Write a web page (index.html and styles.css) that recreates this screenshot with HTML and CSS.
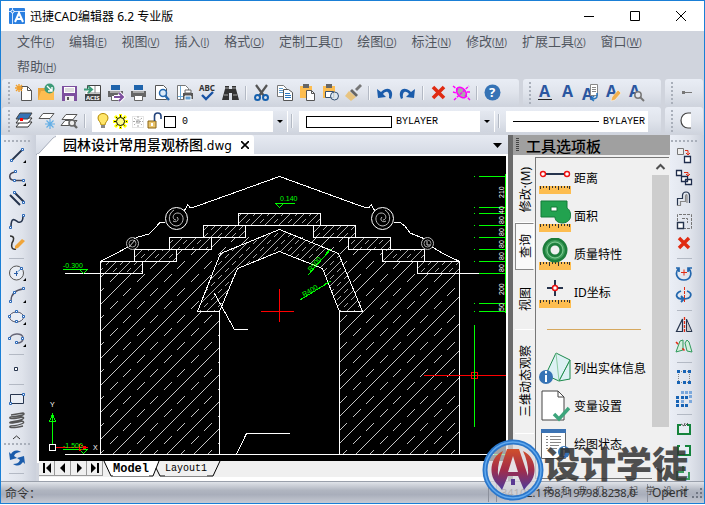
FILE: index.html
```html
<!DOCTYPE html>
<html lang="zh-CN">

<head>
    <meta charset="UTF-8" />
    <meta name="viewport" content="width=device-width, initial-scale=1.0" />
    <title>迅捷CAD编辑器 6.2 专业版</title>
    <link rel="stylesheet" href="styles.css">
</head>

<body>

    <div class="window">
        <header class="titlebar">
            <svg class="app-icon" width="16" height="16" viewBox="0 0 16 16">
                <rect width="16" height="16" rx="1" fill="#2a7fe0" />
                <path d="M3.500 0V16M0 3.500H16" stroke="#cfe4ff" />
                <circle cx="3.500" cy="3.500" r="1.500" fill="#2a7fe0" stroke="#fff" />
                <path d="M6 14L10 5L14 14M7.500 11H12.500" fill="none" stroke="#fff" stroke-width="2" />
            </svg>
            <h1>迅捷CAD编辑器 6.2 专业版</h1>
            <div class="window-buttons">
                <button aria-label="最小化"><svg width="12" height="12"><path d="M1 6.500H11" /></svg></button>
                <button aria-label="最大化"><svg width="12" height="12"><path d="M1.500 1.500H10.500V10.500H1.500Z" /></svg></button>
                <button aria-label="关闭"><svg width="12" height="12"><path d="M1 1L11 11M11 1L1 11" /></svg></button>
            </div>
        </header>

        <nav class="menubar">
            <button>文件<small>(<u>F</u>)</small></button>
            <button>编辑<small>(<u>E</u>)</small></button>
            <button>视图<small>(<u>V</u>)</small></button>
            <button>插入<small>(<u>I</u>)</small></button>
            <button>格式<small>(<u>O</u>)</small></button>
            <button>定制工具<small>(<u>T</u>)</small></button>
            <button>绘图<small>(<u>D</u>)</small></button>
            <button>标注<small>(<u>N</u>)</small></button>
            <button>修改<small>(<u>M</u>)</small></button>
            <button>扩展工具<small>(<u>X</u>)</small></button>
            <button>窗口<small>(<u>W</u>)</small></button>
            <button>帮助<small>(<u>H</u>)</small></button>
        </nav>

        <!-- Standard toolbar -->
        <div class="toolbar-row">
            <div class="toolbar main">
                <span class="grip"></span>
                <button aria-label="新建"><svg viewBox="0 0 19 19"><path d="M7.500 3.500H13.500L17.500 7.500V17.500H7.500Z" fill="#fff" stroke="#555" /><path d="M13.500 3.500V7.500H17.500" fill="none" stroke="#555" /><path d="M5 1V9M1 5H9M2 2L8 8M8 2L2 8" stroke="#f0a030" stroke-width="1.400" /></svg></button>
                <button aria-label="打开"><svg viewBox="0 0 19 19"><path d="M1 5H8V17H1Z" fill="#e8a33c" /><path d="M1 17L4 8H17V17Z" fill="#fdbd50" /><circle cx="12.500" cy="5.500" r="5" fill="#3d9b78" /><path d="M10 3L15 8M15 4V8H11" fill="none" stroke="#fff" stroke-width="1.400" /></svg></button>
                <button aria-label="保存"><svg viewBox="0 0 19 19"><path d="M2 3H17V18H2Z" fill="#7d4f9f" /><path d="M4 4H15V10H4Z" fill="#fff" /><path d="M5 6H14M5 8H14" stroke="#bbb" /><path d="M5 13H14V18H5Z" fill="#eee" /><path d="M7 14H9V17H7Z" fill="#555" /></svg></button>
                <button aria-label="导出 ACIS"><svg viewBox="0 0 19 19"><path d="M4.500 6V2.500H17.500V17.500H2.500V11" fill="#fff" stroke="#444" /><path d="M12 3V10M4 10H17" stroke="#888" /><path d="M2 11H18V18H2Z" fill="#444" /><text x="3" y="17" font-size="6" font-weight="700" fill="#fff">ACIS</text><path d="M1 6.500H8M5 3L9 6.500L5 10" fill="none" stroke="#3d9b78" stroke-width="2" /></svg></button>
                <button aria-label="快速打印"><svg viewBox="0 0 19 19"><use href="#printer" /><path d="M8 14H17M13 10L17 14L13 18" fill="none" stroke="#fff" stroke-width="4" /><path d="M8 14H17M13 10L17 14L13 18" fill="none" stroke="#7d4f9f" stroke-width="2" /></svg></button>
                <button aria-label="打印"><svg viewBox="0 0 19 19"><g id="printer"><path d="M5 2H14V7H5Z" fill="#1f64ac" /><path d="M2 8H17V14H2Z" fill="#666" /><path d="M4 8H15V10H4Z" fill="#aaa" /><path d="M5.500 12.500H13.500V17.500H5.500Z" fill="#fff" stroke="#666" /></g></svg></button>
                <button aria-label="打印预览"><svg viewBox="0 0 19 19"><path d="M3.500 2.500H11.500L14.500 5.500V16.500H3.500Z" fill="#fff" stroke="#555" /><circle cx="11" cy="10" r="3.500" fill="#dceaf7" stroke="#2367ae" stroke-width="1.500" /><path d="M13.500 13L17 17" stroke="#2367ae" stroke-width="2.400" /></svg></button>
                <button aria-label="页面设置"><svg viewBox="0 0 19 19"><path d="M2.500 2.500H10.500L13.500 5.500V16.500H2.500Z" fill="#fff" stroke="#777" /><path d="M5.500 3V16M3 13.500H10" stroke="#6aa9d8" /><path d="M8 10H18V16H8Z" fill="#555" /><path d="M10 7H16V10H10Z" fill="#fff" stroke="#666" /><path d="M10 13H16V17H10Z" fill="#5c9bd0" stroke="#fff" /></svg></button>
                <button aria-label="拼写检查"><svg viewBox="0 0 19 19"><text x="1" y="8" font-size="8" font-weight="700" fill="#333">ABC</text><path d="M4 12L8 16L15 9" fill="none" stroke="#1853a5" stroke-width="2.400" /></svg></button>
                <button aria-label="查找"><svg viewBox="0 0 19 19"><path d="M4 3H8V6H11V3H15V6L18 17H11V10H8V17H1L4 6Z" fill="#333" /><path d="M3 12H7M12 12H16M4 5H8M11 5H15" stroke="#aaa" /></svg></button>
                <span class="sep"></span>
                <button aria-label="剪切"><svg viewBox="0 0 19 19"><path d="M4 2L12 13M15 2L7 13" stroke="#555" stroke-width="2.200" /><circle cx="5.500" cy="14.500" r="2.500" fill="none" stroke="#1560ae" stroke-width="2" /><circle cx="13.500" cy="14.500" r="2.500" fill="none" stroke="#1560ae" stroke-width="2" /></svg></button>
                <button aria-label="复制"><svg viewBox="0 0 19 19"><path d="M2.500 2.500H8.500L11.500 5.500V13.500H2.500Z" fill="#fff" stroke="#777" /><path d="M4 5.500H8M4 7.500H9M4 9.500H9" stroke="#5c9bd0" /><path d="M8.500 6.500H13.500L17.500 9.500V17.500H8.500Z" fill="#fff" stroke="#555" /><path d="M10 10.500H15M10 12.500H16M10 14.500H16" stroke="#2a76bd" /></svg></button>
                <button aria-label="粘贴"><svg viewBox="0 0 19 19"><use href="#clip" /><path d="M8.500 7.500H13.500L16.500 10.500V17.500H8.500Z" fill="#fff" stroke="#555" /><path d="M13.500 7.500V10.500H16.500" fill="none" stroke="#555" /></svg></button>
                <button aria-label="选择性粘贴"><svg viewBox="0 0 19 19"><g id="clip"><path d="M2 3H14V15H2Z" fill="#fdbd50" /><path d="M5 1H11V5H5Z" fill="#666" /></g><path d="M4.500 8.500H12.500V14.500H4.500Z" fill="#fff" stroke="#35506f" /><circle cx="13.500" cy="13" r="4" fill="#dbe8f5" fill-opacity=".8" stroke="#35506f" /></svg></button>
                <button aria-label="格式刷"><svg viewBox="0 0 19 19"><path d="M11 6L16 1L18 3L13 8Z" fill="#777" /><path d="M8 6L14 12L12 14L6 8Z" fill="#666" /><path d="M5 8L12 14L7 18L1 13Z" fill="#e8c480" /></svg></button>
                <span class="sep"></span>
                <button aria-label="撤销"><svg viewBox="0 0 19 19"><path d="M2 6L3 15L11 14L8 11C11 7 15 8 14 15L16 16C20 7 13 2 6 9Z" fill="#1b5cab" /></svg></button>
                <button aria-label="重做"><svg viewBox="0 0 19 19"><path d="M17 6L16 15L8 14L11 11C8 7 4 8 5 15L3 16C-1 7 6 2 13 9Z" fill="#1b5cab" /></svg></button>
                <span class="sep"></span>
                <button aria-label="删除"><svg viewBox="0 0 19 19"><path d="M4 4L15 15M15 4L4 15" stroke="#e02b12" stroke-width="3.600" /></svg></button>
                <button aria-label="清除"><svg viewBox="0 0 19 19"><ellipse cx="9.500" cy="9.500" rx="4" ry="6" transform="rotate(-40 9.500 9.500)" fill="#aaa" stroke="#f0f" stroke-width="1.500" /><path d="M1 3L6 7M2 17L17 3M13 12L18 17M1 9L4 10M15 9H18" stroke="#f0f" stroke-width="1.400" stroke-dasharray="3 1" /></svg></button>
                <span class="sep"></span>
                <button aria-label="帮助"><svg viewBox="0 0 19 19"><circle cx="9.500" cy="9.500" r="8" fill="#3673b5" /><text x="6" y="14" font-size="13" font-weight="700" fill="#fff">?</text></svg></button>
            </div>
            <div class="toolbar text-tools">
                <span class="grip"></span>
                <button aria-label="单行文字"><svg viewBox="0 0 19 19"><text x="4" y="14" class="letter">A</text><path d="M3 16.500H17" stroke="#222" /></svg></button>
                <button aria-label="多行文字"><svg viewBox="0 0 19 19"><text x="4" y="14" class="letter">A</text></svg></button>
                <button aria-label="文字样式"><svg viewBox="0 0 19 19"><text x="1" y="17" class="letter">A</text><path d="M9.500 1.500H16.500V12.500H9.500Z" fill="#fff" stroke="#888" /><path d="M11 4.500H15M11 6.500H15M11 8.500H15" stroke="#888" /><path d="M16 10V13C16 15 14 16 11 16M13 13L10 16L13 18" fill="none" stroke="#2a76bd" stroke-width="1.500" /></svg></button>
                <button aria-label="编辑文字"><svg viewBox="0 0 19 19"><text x="2" y="14" class="letter">A</text><path d="M8 14L14 7L17 10L11 17L7 18Z" fill="#f0b050" stroke="#fff" stroke-width=".5" /></svg></button>
                <button aria-label="查找文字"><svg viewBox="0 0 19 19"><text x="2" y="14" class="letter">A</text><circle cx="11" cy="12" r="3.200" fill="#e4e7ee" stroke="#777" stroke-width="1.500" /><path d="M13 14L17 18" stroke="#777" stroke-width="2" /></svg></button>
            </div>
            <div class="toolbar rest">
                <span class="grip"></span>
                <button aria-label="点"><svg viewBox="0 0 19 19"><path d="M5 9.500H15" stroke="#777" /><path d="M5 8H8V11H5Z" fill="#777" /></svg></button>
            </div>
        </div>

        <!-- Layer and property toolbar -->
        <div class="toolbar-row">
            <div class="toolbar props">
                <span class="grip"></span>
                <button aria-label="图层特性"><svg viewBox="0 0 19 19"><path d="M6 11H18L14 16H2Z" fill="#fff" stroke="#333" /><path d="M6 7H18L14 12H2Z" fill="#fff" stroke="#333" /><path d="M6 2H18L14 8H2Z" fill="#3673b5" stroke="#444" /><path d="M6 7H9V10H6Z" fill="#f00" /></svg></button>
                <button aria-label="冻结图层"><svg viewBox="0 0 19 19"><path d="M6 2.500H17L13 7.500H2Z" fill="#fff" stroke="#555" /><path d="M13 8V18M8 13H18M9.500 9.500L16.500 16.500M16.500 9.500L9.500 16.500" stroke="#62aee6" stroke-width="1.200" /></svg></button>
                <button aria-label="查找图层"><svg viewBox="0 0 19 19"><path d="M5 9.500H17L13 14.500H1Z" fill="#fff" stroke="#555" /><path d="M6 3.500H17L13 8.500H2Z" fill="#fff" stroke="#555" /><circle cx="12" cy="12" r="3" fill="#eee" stroke="#666" stroke-width="1.600" /><path d="M14 14L17 17" stroke="#666" stroke-width="2.400" /></svg></button>
                <span class="sep"></span>
                <div class="combo layer">
                    <svg width="66" height="19" viewBox="0 0 66 19">
                        <path d="M1 6C1 0 11 0 11 6C11 9 8 10 8 13H4C4 10 1 9 1 6Z" fill="#ffe66a" stroke="#b58a00" /><path d="M4 13H8V16H4Z" fill="#888" />
                        <path d="M23.500 2V17M16 9.500H31M18 4L29 15M29 4L18 15" stroke="#ff0" stroke-width="3" /><path d="M23.500 3V16M17 9.500H30M19 5L28 14M28 5L19 14" stroke="#111" stroke-dasharray="2 1" /><circle cx="23.500" cy="9.500" r="4" fill="#ff8" stroke="#111" />
                        <path d="M35.500 4.500H46.500V15.500H35.500Z" fill="none" stroke="#ccc" stroke-dasharray="1 1" /><path d="M41 4V15M36 9.500H46M37 6L45 13M45 6L37 13" stroke="#aaa" stroke-dasharray="2 1" />
                        <path d="M51 9H59V16H51Z" fill="#e9c46b" stroke="#8a6414" /><path d="M57.500 9V4C57.500 0 64 0 64 4V7" fill="none" stroke="#24447c" stroke-width="1.600" /><path d="M54 11H56V14H54Z" fill="#fff" />
                    </svg>
                    <span class="color-box"></span>
                    <select aria-label="图层"><option>0</option></select>
                    <span class="drop"></span>
                </div>
                <span class="sep"></span>
                <div class="combo color">
                    <span class="swatch"></span>
                    <select aria-label="颜色"><option>BYLAYER</option></select>
                    <span class="drop"></span>
                </div>
                <span class="sep"></span>
                <div class="combo linetype">
                    <span class="line"></span>
                    <select aria-label="线型"><option>BYLAYER</option></select>
                </div>
            </div>
            <div class="toolbar rest">
                <span class="grip"></span>
                <button aria-label="圆弧"><svg viewBox="0 0 19 19"><path d="M14 2H11A7 7.500 0 0 0 11 17H14" fill="#fff" stroke="#444" stroke-width="1.200" /></svg></button>
            </div>
        </div>

        <main class="workspace">
            <!-- Draw tools -->
            <div class="sidebar">
                <span class="grip"></span>
                <button aria-label="直线"><svg viewBox="0 0 18 18"><path d="M4 14L14 4" stroke="#26344d" stroke-width="1.800" /><path class="node" d="M2.500 13.500h2v2h-2ZM13.500 2.500h2v2h-2Z" /><path d="M18 14V17H15Z" /></svg></button>
                <button aria-label="多段线"><svg viewBox="0 0 18 18"><path d="M7 4C0 5 0 12 7 12.500H14" fill="none" stroke="#445" stroke-width="1.500" /><path class="node" d="M6.500 2.500h2v2h-2ZM5.500 11.500h2v2h-2ZM14.500 11.500h2v2h-2Z" /><path d="M18 15V18H15Z" /></svg></button>
                <button aria-label="双线"><svg viewBox="0 0 18 18"><path d="M7 3L16 12M2 5L12 15" stroke="#26344d" stroke-width="2" /><path class="node" d="M5.500 1.500h2v2h-2ZM14.500 11.500h2v2h-2Z" /></svg></button>
                <button aria-label="样条曲线"><svg viewBox="0 0 18 18"><path d="M3 15C3 3 8 9 10 10C14 11 15 8 15 4" fill="none" stroke="#26344d" stroke-width="1.600" /><path class="node" d="M1.500 14.500h2v2h-2ZM14.500 2.500h2v2h-2Z" /></svg></button>
                <button aria-label="徒手画"><svg viewBox="0 0 18 18"><path d="M2 2C7 2 6 6 4 9C3 13 4 16 8 15" fill="none" stroke="#333" stroke-width="1.500" /><path d="M7 12L14 5L17 7L10 14L7 15Z" fill="#f0a53a" /></svg></button>
                <span class="sep"></span>
                <button aria-label="圆"><svg viewBox="0 0 18 18"><circle cx="8.500" cy="9" r="7" fill="#e9edf4" stroke="#555" /><path d="M8 9L13 5" stroke="#2a76bd" stroke-dasharray="2 1" /><path d="M6 9.500H10M8.500 7V12" stroke="#2a5fa8" /><path class="node" d="M12.500 3.500h2v2h-2Z" /><path d="M18 14V17H15Z" /></svg></button>
                <button aria-label="圆弧"><svg viewBox="0 0 18 18"><path d="M3 15C3 8 8 4 15 3" fill="none" stroke="#556" stroke-width="1.300" /><path class="node" d="M1.500 14.500h2v2h-2ZM5.500 5.500h2v2h-2ZM14.500 1.500h2v2h-2Z" /><path d="M18 14V17H15Z" /></svg></button>
                <button aria-label="椭圆"><svg viewBox="0 0 18 18"><ellipse cx="8.500" cy="9" rx="7" ry="5" fill="#e9edf4" stroke="#556" /><path class="node" d="M0.500 7.500h2v2h-2ZM7.500 2.500h2v2h-2ZM14.500 7.500h2v2h-2ZM7.500 12.500h2v2h-2Z" /><path d="M18 14V17H15Z" /></svg></button>
                <button aria-label="椭圆弧"><svg viewBox="0 0 18 18"><path d="M2 9C2 3 15 2 15 8C15 12 12 13 9 13" fill="none" stroke="#667" stroke-width="1.500" /><path class="node" d="M0.500 7.500h2v2h-2ZM13.500 7.500h2v2h-2ZM7.500 11.500h2v2h-2Z" /><path d="M18 14V17H15Z" /></svg></button>
                <span class="sep"></span>
                <button aria-label="点"><svg viewBox="0 0 18 18"><path d="M6.500 7.500h3v3h-3Z" fill="#fff" stroke="#26344d" /></svg></button>
                <span class="sep"></span>
                <button aria-label="矩形"><svg viewBox="0 0 18 18"><path d="M2.500 4.500H15.500V13.500H2.500Z" fill="#e9edf4" stroke="#26344d" /><path class="node" d="M1.500 12.500h2v2h-2ZM14.500 3.500h2v2h-2Z" /></svg></button>
                <button aria-label="螺旋"><svg viewBox="0 0 18 18"><path d="M3 3L15 1C18 2 15 4 3 5C0 6 2 8 14 5C18 6 15 8 3 10C0 11 2 12 14 9C18 10 15 13 3 14C0 15 2 17 15 14" fill="none" stroke="#555" stroke-width="1.400" /></svg></button>
                <button class="more" aria-label="更多"><svg width="9" height="5"><path d="M1 4L4.500 1L8 4" fill="none" stroke="#333" /></svg></button>
                <span class="grip"></span>
                <button aria-label="重生成"><svg viewBox="0 0 18 18"><path d="M1 3L2 11L9 9L6 7C7 4 10 3 13 3C8 0 5 2 3 5ZM17 15L16 7L9 9L12 11C11 14 8 15 5 15C10 18 13 16 15 13Z" fill="#1b5cab" /></svg></button>
                <span class="sep"></span>
            </div>

            <!-- Document -->
            <section class="document">
                <div class="doc-tabs">
                    <svg width="20" height="20"><path d="M0 20H2L18 2Q19 1 20 1V20Z" fill="#fff" /><path d="M0 19.500Q3 19 5 16L17 3Q19 1.500 20 1.500" fill="none" stroke="#aab0bd" /></svg>
                    <div class="doc-tab">
                        <a href="#drawing">园林设计常用景观桥图<span>.dwg</span></a>
                        <button aria-label="关闭文档"><svg width="8" height="8"><path d="M0 0L8 8M8 0L0 8" stroke="#000" stroke-width="1.600" /></svg></button>
                    </div>
                    <button class="doc-list" aria-label="文档列表"><svg width="9" height="5"><path d="M0 0H9L4.500 5Z" /></svg></button>
                </div>

                <svg class="drawing" id="drawing" role="img" aria-label="桥立面图">
                    <defs>
                        <pattern id="wide" width="27" height="27" patternUnits="userSpaceOnUse">
                            <path d="M-1 28L28 -1M2 12L10 4M15 26L23 18" stroke="#c4c4c4" />
                        </pattern>
                        <pattern id="tight" width="14" height="14" patternUnits="userSpaceOnUse">
                            <path d="M-1 15L15 -1M1 6L5 2M8 13L12 9" stroke="#aaa" />
                        </pattern>
                        <g id="side">
                            <path fill="url(#wide)" stroke="none" d="M100 273H142V261H176V249H211V237H260L220 253L197 311H219V454H100Z" />
                            <path fill="url(#tight)" d="M100.500 261.500H142.500V273.500H100.500ZM134.500 249.500H176.500V261.500H134.500ZM169.500 237.500H211.500V249.500H169.500ZM203.500 225.500H245.500V237.500H203.500Z" />
                            <path d="M100.500 261.500V454.500M219.500 311.500V454.500" />
                            <path d="M279.500 176.500L193 207.500L190 207.500L187.500 204.500L186 208L184 211M165 222.500H160L154 229L149 234L138 237L134 239M128 247L115 254L100.500 261.500" />
                            <g class="smooth">
                                <circle cx="176.500" cy="218.500" r="11" />
                                <path stroke="#bbb" d="M176 220C172 220 172 213 178 213C186 214 184 226 176 226C168 225 167 214 174 210M177 217C180 220 176 223 173 221" />
                                <circle cx="132.500" cy="243.500" r="6" stroke="#bbb" />
                                <circle cx="132.500" cy="243.500" r="3.500" stroke="#999" />
                                <path stroke="#ccc" d="M129 247L135 240" />
                            </g>
                        </g>
                    </defs>
                    <g transform="translate(-39 -156)" fill="none" stroke="#fff" shape-rendering="crispEdges">
                        <use href="#side" />
                        <path fill="url(#wide)" stroke="none" d="M459 273H417V261H383V249H348V237H299L339 253L362 311H340V454H459Z" />
                        <path fill="url(#tight)" d="M417.500 261.500H459.500V273.500H417.500ZM382.500 249.500H424.500V261.500H382.500ZM348.500 237.500H390.500V249.500H348.500ZM313.500 225.500H355.500V237.500H313.500Z" />
                        <path d="M459.500 261.500V454.500M339.500 311.500V454.500M279.500 176.500L365 207.500H369L371.500 204.500L373 208L375 211M394 222.500H400L405 226L410 233L420 237L425 239M432 247L444 254L459.500 261.500" />
                        <g class="smooth">
                            <circle cx="382.500" cy="218.500" r="11" />
                            <path stroke="#bbb" d="M383 220C387 220 387 213 381 213C373 214 375 226 383 226C391 225 392 214 385 210M382 217C379 220 383 223 386 221" />
                            <circle cx="427.500" cy="243.500" r="6" stroke="#bbb" />
                            <circle cx="427.500" cy="243.500" r="3.500" stroke="#999" />
                            <path stroke="#ccc" d="M427 241V245H430" />
                        </g>
                        <path fill="url(#tight)" d="M238.500 213.500H320.500V225.500H238.500Z" />
                        <path fill="url(#tight)" d="M279.500 229.500L220.500 253.500L197.500 311.500H219.500L237.500 268.500L279.500 251.500L322.500 268.500L339.500 311.500H362.500L338.500 253.500Z" />
                        <path d="M65 273.500H142M459 273.500H479M65 454.500H506M214.500 293.500L234.500 329.500H248M236.500 454.500L246.500 433.500H290" />

                        <path stroke="#f00" d="M261 311.500H294M279.500 289V322M424 375.500H506M471.500 372.500H477.500V378.500H471.500Z" />
                        <g stroke="#0f0">
                            <path d="M474.500 325V427M505.500 174V313M479 176.500H506M479 207.500H506M479 213.500H506M479 225.500H506M479 237.500H506M479 249.500H506M479 261.500H506M479 273.500H506M479 303.500H506M479 311.500H506M494 454.500H506" />
                            <path stroke-dasharray="1 100" d="M474 176.500H477M474 207.500H477M474 213.500H477M474 225.500H477M474 237.500H477M474 249.500H477M474 261.500H477M474 303.500H477M474 311.500H477" />
                            <path d="M275 203.500H295M275.500 203.500L279.500 207.500L283.500 203.500M63 269.500H88M79.500 269.500L83.500 273.500L87.500 269.500" />
                            <path d="M308 275L331 249M300 300L331 281M326 253L331 249M325 284L331 281" />
                            <path d="M52.500 445V415M49.500 421.500H55.500L52.500 414ZM63 449.500H88M79.500 449.500L83.500 453.500L87.500 449.500" />
                        </g>
                        <path stroke="#f00" d="M55 447.500H87M79.500 444.500V450.500L87 447.500Z" />
                        <path d="M49.500 444.500H55.500V450.500H49.500Z" />

                        <g class="dim" stroke="none" fill="#0f0">
                            <text x="280" y="201">0.140</text>
                            <text x="63" y="268">-0.300</text>
                            <text x="63" y="448">-1.500</text>
                            <text transform="translate(311 272) rotate(-50)">R500</text>
                            <text transform="translate(304 297) rotate(-31)">R400</text>
                        </g>
                        <g class="dim" stroke="none" fill="#fff">
                            <text x="50" y="407">Y</text>
                            <text x="93" y="450">X</text>
                            <text transform="translate(504 198) rotate(-90)">210</text>
                            <text transform="translate(504 214) rotate(-90)">40</text>
                            <text transform="translate(504 224) rotate(-90)">80</text>
                            <text transform="translate(504 236) rotate(-90)">80</text>
                            <text transform="translate(504 248) rotate(-90)">80</text>
                            <text transform="translate(504 260) rotate(-90)">80</text>
                            <text transform="translate(504 272) rotate(-90)">80</text>
                            <text transform="translate(504 295) rotate(-90)">200</text>
                            <text transform="translate(504 311) rotate(-90)">50</text>
                        </g>
                    </g>
                </svg>

                <div class="layout-tabs">
                    <button aria-label="第一页"><svg width="10" height="10"><path d="M1 0H3V10H1ZM9 0V10L4 5Z" /></svg></button>
                    <button aria-label="上一页"><svg width="10" height="10"><path d="M7 0V10L2 5Z" /></svg></button>
                    <button aria-label="下一页"><svg width="10" height="10"><path d="M3 0V10L8 5Z" /></svg></button>
                    <button aria-label="最后一页"><svg width="10" height="10"><path d="M7 0H9V10H7ZM1 0V10L6 5Z" /></svg></button>
                    <svg width="10" height="16"><path d="M1 0H10V15H8Z" fill="#fff" /><path d="M1 0L8 15H10" fill="none" stroke="#000" /></svg>
                    <a class="current" href="#model">Model</a>
                    <svg width="16" height="16"><path d="M0 0H10L4 15H0Z" fill="#fff" /><path d="M10 0L4 15H0M7 7L11 15H16" fill="none" stroke="#000" /></svg>
                    <a href="#layout1">Layout1</a>
                    <svg width="14" height="16"><path d="M0 15H6L13 0" fill="none" stroke="#000" /></svg>
                </div>
            </section>

            <!-- Tool palette -->
            <aside class="palette">
                <h2><span class="grip"></span>工具选项板</h2>
                <div class="palette-body">
                    <div class="palette-tabs">
                        <button class="modify"><span>修改·(M)</span></button>
                        <button class="query active"><span>查询</span></button>
                        <button class="view"><span>视图</span></button>
                        <button class="orbit"><span>三维动态观察</span></button>
                        <button class="extra" aria-label="更多选项板"></button>
                    </div>
                    <div class="palette-list">
                        <button><svg viewBox="0 0 32 32"><g id="ruler"><path d="M0 24H32V32H0Z" fill="#fdbd50" /><path d="M1.500 24V27M4.500 24V26M7.500 24V26M10.500 24V28M13.500 24V26M16.500 24V26M19.500 24V28M22.500 24V26M25.500 24V26M28.500 24V26M30.500 24V27" stroke="#333" /></g><path d="M6 12H26" stroke="#26344d" stroke-width="2" /><circle cx="4" cy="12" r="2.500" fill="#fff" stroke="#e11" stroke-width="1.400" /><circle cx="28" cy="12" r="2.500" fill="#fff" stroke="#e11" stroke-width="1.400" /></svg>距离</button>
                        <button><svg viewBox="0 0 32 32"><use href="#ruler" /><path d="M2 1H28V8C33 11 34 22 24 23C18 23 16 20 16 17H2Z" fill="#22a24f" stroke="#127a38" /><path d="M12 7H18V11H12Z" fill="#fff" stroke="#127a38" /></svg>面积</button>
                        <button><svg viewBox="0 0 32 32"><use href="#ruler" /><circle cx="16" cy="12" r="8.500" fill="none" stroke="#1c7d3b" stroke-width="8" /><circle cx="16" cy="12" r="8.500" fill="none" stroke="#3f9f5c" stroke-width="3" /><circle cx="16" cy="12" r="8" fill="none" stroke="#8fd2a0" stroke-width=".800" /></svg>质量特性</button>
                        <button><svg viewBox="0 0 32 32"><use href="#ruler" /><path d="M16 4V20M8 12H24" stroke="#26344d" stroke-width="2" /><circle cx="16" cy="12" r="2.500" fill="#fff" stroke="#e11" stroke-width="1.500" /></svg>ID坐标</button>
                        <hr>
                        <button><svg viewBox="0 0 32 32"><path d="M8 20L17 1L31 8V27L20 29L9 24Z" fill="#dcf1f4" stroke="#1c8a4c" /><path d="M31 8L20 29L17 1" fill="none" stroke="#8ccca4" /><path d="M31 8L20 29" stroke="#1c8a4c" /><circle cx="7" cy="25" r="7" fill="#3673b5" /><path d="M7 23V30M7 19V21.500" stroke="#fff" stroke-width="2" /></svg>列出实体信息</button>
                        <button><svg viewBox="0 0 32 32"><path d="M3 1H19L25 7V30H3Z" fill="#fff" stroke="#444" /><path d="M19 1V7H25" fill="none" stroke="#444" /><path d="M15 24L20 29L30 18" fill="none" stroke="#3da57c" stroke-width="3.500" /></svg>变量设置</button>
                        <button><svg viewBox="0 0 32 32"><path d="M2.500 1.500H26.500V30.500H2.500Z" fill="#fff" stroke="#666" /><path d="M2 1H27V5H2Z" fill="#3b73b4" /><path d="M7 8.500H9M11 8.500H22M7 11.500H9M11 11.500H22M7 14.500H9M11 14.500H22M7 17.500H9M11 17.500H20M7 20.500H9M11 20.500H18" stroke="#888" /><circle cx="25" cy="24" r="6" fill="#3673b5" /><path d="M25 22V28M25 19V21" stroke="#fff" stroke-width="2" /></svg>绘图状态</button>
                    </div>
                    <div class="scrollbar">
                        <svg width="17" height="17"><path d="M4.500 11L8.500 7L12.500 11" fill="none" stroke="#505050" stroke-width="2" /></svg>
                        <span class="thumb"></span>
                        <svg width="17" height="17"><path d="M4.500 6L8.500 10L12.500 6" fill="none" stroke="#505050" stroke-width="2" /></svg>
                    </div>
                </div>
            </aside>

            <!-- Modify tools -->
            <div class="sidebar right">
                <span class="grip"></span>
                <button aria-label="复制"><svg viewBox="0 0 18 18"><path d="M2.500 2.500H8.500V8.500H2.500Z" fill="#eee" stroke="#777" /><path d="M9.500 10.500H15.500V16.500H9.500Z" fill="#fff" stroke="#1e2c4c" stroke-width="1.300" /><path d="M10 4.500H13V8M11 7L13 9L15 7" fill="none" stroke="#e02b12" /></svg></button>
                <button aria-label="多重复制"><svg viewBox="0 0 18 18"><path d="M1.500 2.500H6.500V7.500H1.500ZM6.500 8.500H12.500V13.500H6.500ZM10.500 11.500H16.500V16.500H10.500Z" fill="#fff" stroke="#1e2c4c" stroke-width="1.300" /><path d="M9 4.500H13V7M11 6L13 8L15 6" fill="none" stroke="#e02b12" /></svg></button>
                <button aria-label="偏移"><svg viewBox="0 0 18 18"><path d="M2.500 15.500V8.500H7.500V5C8 1 14 1 14.500 5V13" fill="none" stroke="#26344d" stroke-width="1.200" /><path d="M5.500 15.500V11.500H10.500V6C11 4 12 4 12 6V13M2 15.500H6" fill="none" stroke="#888" stroke-width="1.200" /></svg></button>
                <button aria-label="缩放"><svg viewBox="0 0 18 18"><path d="M2.500 9V2.500H16.500V16.500H9M7 6.500H12.500V11" fill="none" stroke="#777" stroke-dasharray="3 1" /><path d="M2.500 10.500H8.500V16.500H2.500Z" fill="#fff" stroke="#26344d" stroke-width="1.400" /></svg></button>
                <button aria-label="删除"><svg viewBox="0 0 18 18"><path d="M4 4L14 14M14 4L4 14" stroke="#e02b12" stroke-width="3.400" /></svg></button>
                <span class="sep"></span>
                <button aria-label="旋转"><svg viewBox="0 0 18 18"><path d="M4 4C-1 9 2 16 9 16C16 16 18 8 13 4M13 8V4H17M1 4H4V8" fill="none" stroke="#2367ae" stroke-width="1.700" /><path d="M6 8.500H12M9 5.500V11.500" stroke="#e02b12" /></svg></button>
                <button aria-label="三维旋转"><svg viewBox="0 0 18 18"><path d="M6 5C-1 8 1 13 8 13C17 13 18 7 12 5M6 10L9 13L6 16" fill="none" stroke="#2367ae" stroke-width="1.800" /><path d="M9.500 1V17" stroke="#e02b12" stroke-dasharray="3 1" /></svg></button>
                <span class="sep"></span>
                <button aria-label="镜像"><svg viewBox="0 0 18 18"><path d="M7.500 3V15.500H1.500Z" fill="none" stroke="#26344d" stroke-width="1.200" /><path d="M11.500 3V15.500H17Z" fill="#ccc" stroke="#26344d" /><path d="M9.500 1V17" stroke="#e02b12" stroke-width="1.300" stroke-dasharray="3 1" /></svg></button>
                <button aria-label="三维镜像"><svg viewBox="0 0 18 18"><path d="M5 3L8 2L8 12L1 14ZM12 2L14 4L17 14L12 13L10 5Z" fill="#d6eedd" stroke="#2f9a5c" /><path d="M1 4L12 15" stroke="#e02b12" stroke-width="1.500" stroke-dasharray="3 6" /></svg></button>
                <span class="sep"></span>
                <button aria-label="阵列"><svg viewBox="0 0 18 18"><path d="M3.500 4V14M14.500 4V14M4 3.500H14M4 14.500H14" stroke="#888" stroke-dasharray="1 1" /><path d="M2 2h3v3h-3ZM8 2h3v3h-3ZM13 2h3v3h-3ZM2 13h3v3h-3ZM8 13h3v3h-3ZM13 13h3v3h-3Z" fill="#1763b5" /></svg></button>
                <button aria-label="三维阵列"><svg viewBox="0 0 18 18"><path d="M6 1h3v3h-3ZM10 1h3v3h-3ZM14 1h3v3h-3ZM6 10h3v3h-3ZM14 10h3v3h-3ZM14 5h3v3h-3Z" fill="#7ba8dc" /><path d="M1 6h3v3h-3ZM6 6h3v3h-3ZM10 6h3v3h-3ZM1 14h3v3h-3ZM6 14h3v3h-3ZM10 14h3v3h-3ZM1 10h3v3h-3Z" fill="#1763b5" /></svg></button>
                <span class="sep"></span>
                <button aria-label="打断"><svg viewBox="0 0 18 18"><path d="M6 5H3V14H15V5H12" fill="#e9edf4" stroke="#13833c" stroke-width="2" /><path d="M6 4L9 6L10 3M10 6L13 3" fill="none" stroke="#555" /></svg></button>
                <button aria-label="合并"><svg viewBox="0 0 18 18"><path d="M5 4H3V13H15V4H10" fill="#e9edf4" stroke="#13833c" stroke-width="2" /></svg></button>
                <button aria-label="分解"><svg viewBox="0 0 18 18"><path d="M8 2V8H2V15H14V8" fill="none" stroke="#3b9b5d" stroke-width="2" /></svg></button>
            </div>
        </main>

        <footer class="statusbar">
            <label for="command">命令：</label>
            <input id="command" type="text">
            <span class="cell"></span>
            <span class="cell coords">34102.1198,-19798.8238,0</span>
            <span class="cell renderer">Opent</span>
            <svg width="12" height="12"><path d="M8 1h2v2h-2ZM8 5h2v2h-2ZM4 5h2v2h-2ZM8 9h2v2h-2ZM4 9h2v2h-2ZM0 9h2v2h-2Z" fill="#707784" /></svg>
        </footer>
    </div>

    <!-- Site mark over the bottom right corner -->
    <div class="watermark">
        <svg width="62" height="62" viewBox="0 0 62 62">
            <defs>
                <linearGradient id="flame" x1="0" y1="0" x2="0" y2="1">
                    <stop offset="0" stop-color="#d0502c" />
                    <stop offset=".5" stop-color="#a32c48" />
                    <stop offset="1" stop-color="#4c3a9c" />
                </linearGradient>
            </defs>
            <circle cx="31" cy="31" r="28" fill="#d9dade" fill-opacity=".75" stroke="#2b77cb" stroke-width="5" />
            <circle cx="31" cy="31" r="28" fill="none" stroke="#62a9ee" stroke-width="1.500" />
            <path d="M21 12C7 18 5 40 19 48C15 39 14 27 21 12ZM41 12C55 18 57 40 43 48C47 39 48 27 41 12Z" fill="url(#flame)" />
            <path d="M25 10H37L48 43L42 51L34 32H28L20 51L14 43Z" fill="url(#flame)" />
            <path d="M31 17L26 33H36Z" fill="#e6e0e4" />
            <path d="M26 33H36V37H26Z" fill="#8e2f5c" />
            <path d="M29 40H33V46H29Z" fill="#5b3a93" />
        </svg>
        <div class="mark-text">
            <strong>设计学徒</strong>
            <p><span>来</span><span>和</span><span>我</span><span>们</span><span>一</span><span>起</span><span>学</span><span>设</span><span>计</span></p>
        </div>
    </div>

</body>

</html>
```
FILE: styles.css
```css
* {
    box-sizing: border-box;
}

body {
    margin: 0;
    font-family: "Noto Sans", "Noto Sans CJK SC", sans-serif;
    font-size: 12px;
    color: #000;
    background: #fff;
    position: relative;
}

button,
select,
input {
    font: inherit;
    color: inherit;
    background: none;
    border: none;
    padding: 0;
    margin: 0;
}

svg {
    display: block;
    flex: none;
}

a {
    color: inherit;
    text-decoration: none;
}

.window {
    display: flex;
    flex-direction: column;
    height: calc(100vh - 1px);
    min-height: 504px;
    border: 1px solid #1a7fd6;
    background: #d0d4dd;
    overflow: hidden;
}

/* Title bar */
.titlebar {
    display: flex;
    align-items: center;
    height: 30px;
    padding-left: 8px;
    background: #fff;
}

.titlebar h1 {
    flex: 1;
    margin: 0 0 0 5px;
    font-family: "Noto Sans", "Noto Sans CJK SC", sans-serif;
    font-size: 12px;
    font-weight: 400;
}

.window-buttons {
    display: flex;
}

.window-buttons button {
    display: flex;
    align-items: center;
    justify-content: center;
    width: 46px;
    height: 30px;
}

.window-buttons path {
    fill: none;
    stroke: #000;
}

/* Menu bar */
.menubar {
    display: flex;
    flex-wrap: wrap;
    align-content: flex-start;
    column-gap: 15px;
    height: 48px;
    padding: 0 30px 0 16px;
    color: #50565f;
}

.menubar button {
    height: 25px;
    padding-bottom: 4px;
    font-family: "Noto Sans CJK SC", sans-serif;
    font-size: 13px;
    line-height: 20px;
    white-space: nowrap;
}

.menubar small {
    font-family: "Open Sans", "Noto Sans", sans-serif;
    font-size: 10px;
}

/* Toolbars */
.toolbar-row {
    display: flex;
    gap: 4px;
    height: 28px;
    padding: 0 1px 1px 1px;
    flex: none;
}

.toolbar {
    display: flex;
    align-items: center;
    padding-left: 6px;
    border-radius: 3px;
    background: linear-gradient(#e9edf5, #e0e4ec 50%, #cfd4de);
}

.toolbar.main {
    width: 517px;
}

.toolbar.text-tools {
    width: 138px;
}

.toolbar.props {
    width: 659px;
}

.toolbar.rest {
    flex: 1;
}

.toolbar > button {
    display: flex;
    align-items: center;
    justify-content: center;
    width: 23px;
    height: 27px;
}

.toolbar > button svg {
    width: 19px;
    height: 19px;
    overflow: visible;
}

.toolbar text {
    font-family: "Noto Sans", sans-serif;
}

.toolbar .letter {
    font-family: "Open Sans", sans-serif;
    font-size: 16px;
    font-weight: 700;
    fill: #2a56a0;
}

.grip {
    width: 2px;
    height: 22px;
    margin-right: 2px;
    background: repeating-linear-gradient(#a9afba 0 2px, transparent 2px 4px);
}

.toolbar .sep {
    width: 2px;
    height: 14px;
    margin: 0 3px;
    background: #b3b9c4;
    border-right: 1px solid #f5f7fa;
}

.combo {
    display: flex;
    align-items: center;
    height: 21px;
    margin-top: 2px;
    background: #fff;
    font-family: "Liberation Mono", monospace;
    font-size: 10px;
}

.combo select {
    appearance: none;
    flex: 1;
    min-width: 0;
    height: 21px;
}

.combo.layer {
    width: 196px;
    padding-left: 5px;
    margin-left: 3px;
}

.combo.color {
    width: 196px;
    padding-left: 7px;
    margin-left: 3px;
}

.combo.linetype {
    width: 142px;
    padding-left: 7px;
    margin-left: 3px;
}

.color-box {
    width: 12px;
    height: 12px;
    margin: 0 6px 0 1px;
    border: 1px solid #000;
}

.swatch {
    width: 86px;
    height: 12px;
    margin-right: 4px;
    border: 1px solid #000;
}

.line {
    width: 86px;
    height: 1px;
    margin-right: 4px;
    background: #000;
}

.drop {
    display: flex;
    align-items: center;
    justify-content: center;
    width: 14px;
    height: 21px;
    margin-right: 1px;
    background: linear-gradient(#e4e8f0, #d0d5df);
}

.drop::after {
    content: "";
    border: 3px solid transparent;
    border-top-color: #000;
    border-bottom: 0;
}

/* Workspace */
.workspace {
    display: flex;
    flex: 1;
    min-height: 0;
}

.sidebar {
    display: flex;
    flex-direction: column;
    align-items: center;
    flex: none;
    width: 35px;
    overflow: hidden;
    padding: 4px 4px 0 0;
    background: linear-gradient(90deg, #eaeef6, #dfe3eb 60%, #cbd0db);
}

.sidebar .grip {
    flex: none;
    width: 26px;
    height: 2px;
    margin: 1px 0 2px;
    background: repeating-linear-gradient(90deg, #a9afba 0 2px, transparent 2px 4px);
}

.sidebar button {
    display: flex;
    align-items: center;
    justify-content: center;
    flex: none;
    width: 30px;
    height: 22px;
}

.sidebar button svg {
    width: 18px;
    height: 18px;
}

.sidebar .sep {
    flex: none;
    width: 15px;
    height: 1px;
    margin: 4px 0 3px;
    background: #b3b9c4;
}

.sidebar .more {
    height: 10px;
}

.sidebar .more svg {
    width: 9px;
    height: 5px;
}

.sidebar.right {
    width: 34px;
    padding-right: 6px;
}

.node {
    fill: #fff;
    stroke: #2a68b8;
    stroke-width: 1;
}

/* Document */
.document {
    display: flex;
    flex-direction: column;
    flex: 1;
    min-width: 0;
}

.doc-tabs {
    display: flex;
    align-items: flex-start;
    height: 20px;
    border-bottom: 1px solid #9aa0ac;
    background: linear-gradient(#e6eaf2, #d5dae4);
}

.doc-tab {
    display: flex;
    align-items: center;
    gap: 9px;
    height: 20px;
    padding: 0 5px 0 7px;
    background: #fff;
    border-radius: 0 3px 0 0;
    font-family: "Noto Sans CJK SC", sans-serif;
    font-size: 14px;
    font-weight: 500;
    line-height: 18px;
    white-space: nowrap;
}

.doc-tab span {
    font-family: "DejaVu Sans", sans-serif;
    font-size: 12px;
}

.doc-list {
    margin: 8px 6px 0 auto;
}

.drawing {
    flex: 1;
    min-height: 0;
    width: auto;
    margin: 1px 2px 0 3px;
    background: #000;
    outline: 2px solid #fff;
}

.drawing .smooth {
    shape-rendering: auto;
}

.dim {
    font-family: "Liberation Sans Narrow", "Liberation Sans", sans-serif;
    font-size: 7px;
}

.layout-tabs {
    position: relative;
    display: flex;
    height: 20px;
    margin-left: 3px;
    padding-bottom: 4px;
    background: linear-gradient(#f0f0f0 16px, #fff 16px);
    font-family: "Liberation Mono", monospace;
    font-size: 10px;
    line-height: 16px;
}

.layout-tabs button {
    display: flex;
    align-items: center;
    justify-content: center;
    width: 16px;
    height: 15px;
    border-right: 1px solid #999;
    border-bottom: 1px solid #999;
}

.layout-tabs a {
    height: 16px;
    border-bottom: 1px solid #888;
}

.layout-tabs .current {
    background: #fff;
    font-size: 12px;
    font-weight: 700;
}

/* Tool palette */
.palette {
    display: flex;
    flex-direction: column;
    flex: none;
    width: 162px;
    border-left: 5px solid #6b6b6b;
    background: #f0f0f0;
}

.palette h2 {
    display: flex;
    align-items: center;
    gap: 5px;
    height: 20px;
    margin: 0;
    padding-left: 3px;
    background: #a0a0a0;
    font-family: "Noto Sans CJK SC", sans-serif;
    font-size: 15px;
    font-weight: 500;
}

.palette .grip {
    width: 3px;
    height: 14px;
    background: repeating-linear-gradient(#444 0 1px, transparent 1px 2px);
}

.palette-body {
    display: flex;
    flex: 1;
    min-height: 0;
    padding: 2px 1px 2px 0;
}

.palette-tabs {
    display: flex;
    flex-direction: column;
    width: 22px;
    padding: 0 1px 0 2px;
}

.palette-tabs button {
    display: flex;
    align-items: center;
    justify-content: center;
    border-bottom: 1px solid #fff;
}

.palette-tabs span {
    writing-mode: vertical-rl;
    text-orientation: sideways;
    transform: rotate(180deg);
    white-space: nowrap;
}

.palette-tabs .modify {
    height: 66px;
}

.palette-tabs .query {
    height: 47px;
}

.palette-tabs .view {
    height: 60px;
}

.palette-tabs .orbit {
    height: 104px;
}

.palette-tabs .extra {
    flex: 1;
}

.palette-tabs .active {
    border: 1px solid #888;
    border-right-color: #fff;
    background: #f9f9f9;
}

.palette-list {
    flex: 1;
    overflow: hidden;
    padding-top: 1px;
    border: 1px solid #777;
    border-right: 0;
}

.palette-list button {
    display: flex;
    align-items: center;
    gap: 3px;
    width: 100%;
    height: 38px;
    padding-left: 3px;
    white-space: nowrap;
}

.palette-list svg {
    width: 32px;
    height: 32px;
}

.palette-list hr {
    height: 1px;
    margin: 18px 11px 19px 11px;
    border: 0;
    background: #d6a85e;
}

.scrollbar {
    display: flex;
    flex-direction: column;
    flex: none;
    width: 17px;
    border-top: 1px solid #777;
    background: #f0f0f0;
}

.thumb {
    height: 252px;
    background: #cdcdcd;
}

.scrollbar svg:last-child {
    margin-top: auto;
}

/* Status bar */
.statusbar {
    display: flex;
    align-items: center;
    flex: none;
    height: 22px;
    padding-left: 4px;
    border-top: 1px solid #9aa0ab;
    background: linear-gradient(#e0e3e9, #b0b5c0 40%, #a9aebb 60%, #c6cad3);
    color: #333;
}

.statusbar input {
    flex: 1;
    min-width: 0;
}

.cell {
    height: 18px;
    width: 8px;
    border-left: 1px solid #8b909c;
    white-space: nowrap;
    overflow: hidden;
    font-size: 11px;
    line-height: 18px;
}

.coords {
    width: 151px;
    padding-left: 4px;
}

.renderer {
    width: 45px;
    padding-left: 4px;
    font-size: 12px;
}

/* Watermark */
.watermark {
    position: absolute;
    right: 16px;
    bottom: 3px;
    display: flex;
    align-items: flex-start;
    pointer-events: none;
    color: #333;
}

.mark-text {
    width: 145px;
    opacity: 0.85;
}

.mark-text strong {
    display: block;
    font-family: "Noto Sans CJK SC", sans-serif;
    font-size: 36px;
    font-weight: 900;
    line-height: 46px;
}

.mark-text p {
    display: flex;
    justify-content: space-between;
    margin: 0;
    font-size: 9px;
    line-height: 12px;
}
```
